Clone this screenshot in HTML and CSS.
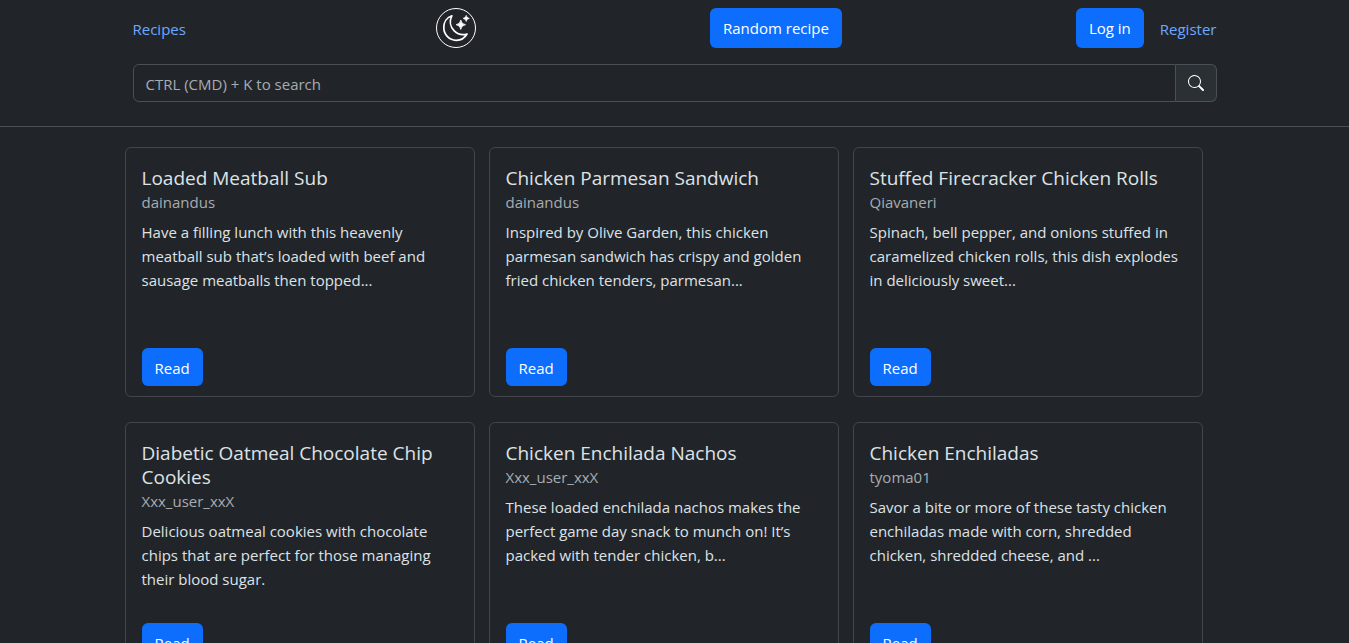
FILE: index.html
```
<!DOCTYPE html>
<html lang="en">
<head>
<meta charset="utf-8">
<meta name="viewport" content="width=device-width, initial-scale=1">
<title>Recipes</title>
<link rel="stylesheet" href="styles.css">
</head>
<body>
<header class="site-header">
  <div class="header-inner">
    <nav class="nav">
      <a class="link brand" href="#">Recipes</a>
      <button class="theme-toggle" type="button" aria-label="Toggle dark theme">
        <svg viewBox="0 0 40 40" width="40" height="40" fill="none" stroke="#fff" aria-hidden="true">
          <circle cx="20" cy="20" r="19.5" stroke-width="1"/>
          <path d="M15.8 7.8C10.6 9.6 7.6 14.6 7.8 20C8 26.8 13.4 32.2 20 32.3C24.8 32.4 28.8 29.8 31 26C26.6 27.2 21.8 26.4 18.2 22.8C14 18.6 13.4 12.6 15.8 7.8Z" stroke-width="1.7" stroke-linejoin="round"/>
          <path d="M24.8 12Q25.3 16.2 29.5 16.7Q25.3 17.2 24.8 21.4Q24.3 17.2 20.1 16.7Q24.3 16.2 24.8 12Z" fill="#fff" stroke-width=".8"/>
          <path d="M30.2 7.2Q30.6 10 33.4 10.4Q30.6 10.8 30.2 13.6Q29.8 10.8 27 10.4Q29.8 10 30.2 7.2Z" fill="#fff" stroke-width=".5"/>
        </svg>
      </button>
      <a class="btn btn-nav" href="#">Random recipe</a>
      <div class="account">
        <a class="btn btn-nav" href="#">Log in</a>
        <a class="link" href="#">Register</a>
      </div>
    </nav>
    <form class="search" role="search">
      <input class="search-input" type="search" placeholder="CTRL (CMD) + K to search" aria-label="Search recipes">
      <button class="search-button" type="submit" aria-label="Search">
        <svg viewBox="0 0 16 16" width="16" height="16" fill="currentColor" aria-hidden="true">
          <path d="M11.742 10.344a6.5 6.5 0 1 0-1.397 1.398h-.001c.03.04.062.078.098.115l3.85 3.85a1 1 0 0 0 1.415-1.414l-3.85-3.85a1.007 1.007 0 0 0-.115-.1zM12 6.5a5.5 5.5 0 1 1-11 0 5.5 5.5 0 0 1 11 0z"/>
        </svg>
      </button>
    </form>
  </div>
</header>
<main class="recipes">
  <article class="card">
    <h2 class="card-title">Loaded Meatball Sub</h2>
    <p class="card-author">dainandus</p>
    <p class="card-text">Have a filling lunch with this heavenly meatball sub that’s loaded with beef and sausage meatballs then topped...</p>
    <a class="btn card-action" href="#">Read</a>
  </article>
  <article class="card">
    <h2 class="card-title">Chicken Parmesan Sandwich</h2>
    <p class="card-author">dainandus</p>
    <p class="card-text">Inspired by Olive Garden, this chicken parmesan sandwich has crispy and golden fried chicken tenders, parmesan...</p>
    <a class="btn card-action" href="#">Read</a>
  </article>
  <article class="card">
    <h2 class="card-title">Stuffed Firecracker Chicken Rolls</h2>
    <p class="card-author">Qiavaneri</p>
    <p class="card-text">Spinach, bell pepper, and onions stuffed in caramelized chicken rolls, this dish explodes in deliciously sweet...</p>
    <a class="btn card-action" href="#">Read</a>
  </article>
  <article class="card">
    <h2 class="card-title">Diabetic Oatmeal Chocolate Chip Cookies</h2>
    <p class="card-author">Xxx_user_xxX</p>
    <p class="card-text">Delicious oatmeal cookies with chocolate chips that are perfect for those managing their blood sugar.</p>
    <a class="btn card-action" href="#">Read</a>
  </article>
  <article class="card">
    <h2 class="card-title">Chicken Enchilada Nachos</h2>
    <p class="card-author">Xxx_user_xxX</p>
    <p class="card-text">These loaded enchilada nachos makes the perfect game day snack to munch on! It’s packed with tender chicken, b...</p>
    <a class="btn card-action" href="#">Read</a>
  </article>
  <article class="card">
    <h2 class="card-title">Chicken Enchiladas</h2>
    <p class="card-author">tyoma01</p>
    <p class="card-text">Savor a bite or more of these tasty chicken enchiladas made with corn, shredded chicken, shredded cheese, and ...</p>
    <a class="btn card-action" href="#">Read</a>
  </article>
</main>
</body>
</html>
```

FILE: styles.css
```
* {
  box-sizing: border-box;
}

body {
  margin: 0;
  background: #212529;
  color: #dee2e6;
  font: 15px/24px "Segoe UI", "Open Sans", "Noto Sans", sans-serif;
}

.site-header {
  padding: 8px 0 24px;
  border-bottom: 1px solid #495057;
}

.header-inner {
  max-width: 1100px;
  margin: 0 auto;
  padding: 0 8px;
}

.nav {
  display: flex;
  align-items: center;
  justify-content: space-between;
  margin-bottom: 16px;
}

.link {
  padding-top: 2px;
  color: #6ea8fe;
  text-decoration: none;
}

.brand {
  padding-right: 16px;
}

.theme-toggle {
  display: flex;
  padding: 0;
  border: 0;
  background: none;
  cursor: pointer;
}

.account {
  display: flex;
  align-items: center;
  gap: 16px;
}

.btn {
  display: inline-block;
  padding: 8px 13px 6px;
  border-radius: 6px;
  background: #0d6efd;
  color: #fff;
  text-decoration: none;
}

.btn-nav {
  padding: 8px 13px;
}

.search {
  display: flex;
  height: 38px;
}

.search-input {
  flex: 1;
  min-width: 0;
  padding: 7px 12px 5px;
  border: 1px solid #495057;
  border-radius: 6px 0 0 6px;
  background: #212529;
  color: inherit;
  font: inherit;
}

.search-input::placeholder {
  color: #a7acb1;
  opacity: 1;
}

.search-button {
  display: flex;
  align-items: center;
  padding: 0 12px;
  border: 1px solid #495057;
  border-left: 0;
  border-radius: 0 6px 6px 0;
  background: #2b3035;
  color: #fff;
}

.recipes {
  display: grid;
  grid-template-columns: repeat(auto-fill, 350px);
  gap: 25px 14px;
  max-width: 1100px;
  margin: 20px auto;
}

.card {
  display: flex;
  flex-direction: column;
  min-height: 250px;
  padding: 18px 16px 10px;
  border: 1px solid #42464a;
  border-radius: 6px;
}

.card-title {
  margin: 0;
  font-size: 19px;
  font-weight: 400;
  line-height: 24px;
}

.card-author {
  margin: 0 0 6px;
  color: #a7acb1;
}

.card-text {
  margin: 0;
}

.card-action {
  align-self: flex-start;
  margin-top: auto;
}
```
